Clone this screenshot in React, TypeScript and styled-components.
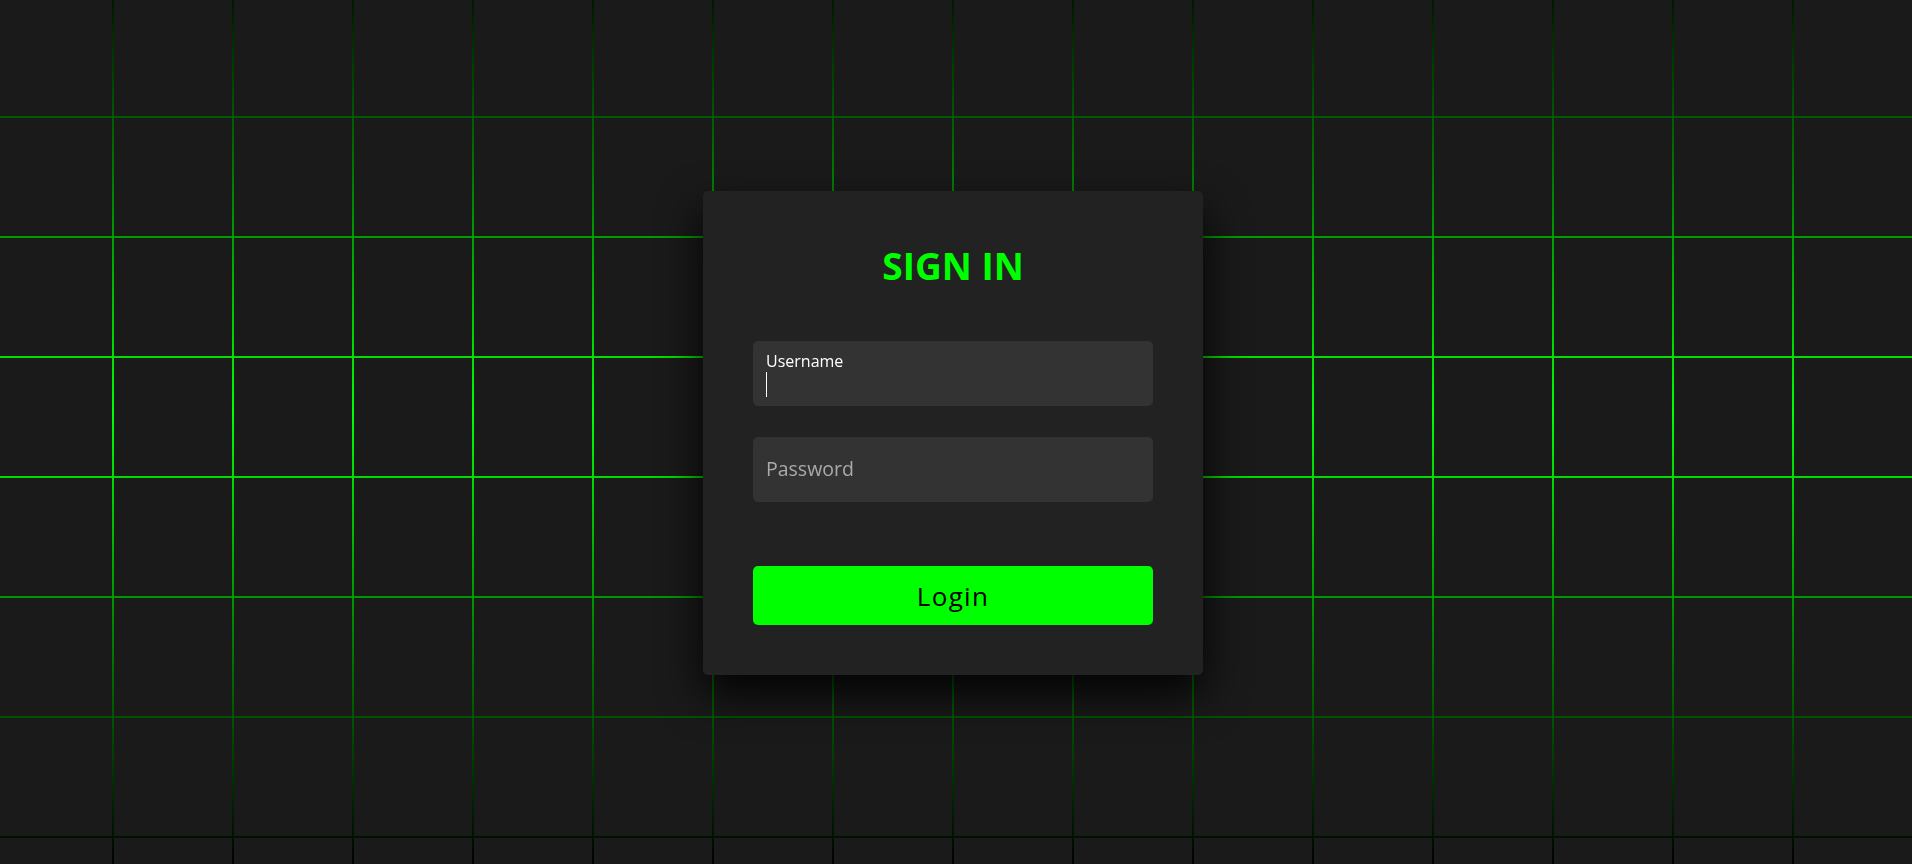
import { useState } from "react";
import styled, { createGlobalStyle } from "styled-components";

const COLUMNS = 16;
const ROWS = 8;

const GlobalStyle = createGlobalStyle`
  * {
    box-sizing: border-box;
  }
  html,
  body {
    margin: 0;
    padding: 0;
    background: #000;
    overflow: hidden;
    font-family: "Open Sans", "Noto Sans", sans-serif;
  }
`;

const Stage = styled.section`
  position: relative;
  width: 100vw;
  height: 100vh;
  overflow: hidden;
  background: #000;
`;

const Squares = styled.div`
  display: grid;
  grid-template-columns: repeat(${COLUMNS}, 118px);
  grid-auto-rows: 118px;
  gap: 2px;
  width: max-content;
  margin: -2px 0 0 -6px;
  background: linear-gradient(to bottom, #000 -42px, #0f0 414px, #000 870px);
`;

const Square = styled.span`
  background: #1a1a1a;
`;

const Overlay = styled.div`
  position: absolute;
  inset: 0;
  display: flex;
  align-items: center;
  justify-content: center;
  padding: 2px 6px 0 0;
`;

const SignIn = styled.div`
  width: 500px;
  padding: 50px;
  background: #222;
  border-radius: 5px;
  box-shadow: 0 19px 44px rgba(0, 0, 0, 0.9);
`;

const Content = styled.div`
  display: flex;
  flex-direction: column;
  align-items: center;
  gap: 50px;
`;

const Title = styled.h2`
  margin: 0;
  height: 50px;
  line-height: 50px;
  font-size: 37px;
  font-weight: 700;
  color: #0f0;
  text-transform: uppercase;
`;

const Form = styled.form`
  width: 100%;
  display: flex;
  flex-direction: column;
  gap: 31px;
`;

const InputBox = styled.div`
  position: relative;
  width: 100%;
`;

const Field = styled.input`
  display: block;
  width: 100%;
  height: 65px;
  padding: 31px 12.5px 9px;
  background: #333;
  border: none;
  outline: none;
  border-radius: 5px;
  color: #fff;
  caret-color: #fff;
  font-family: inherit;
  font-weight: 500;
  font-size: 20px;
  line-height: 25px;
`;

const Label = styled.i<{ $raised?: boolean }>`
  position: absolute;
  left: 13px;
  top: ${(p) => (p.$raised ? "12px" : "22px")};
  font-style: normal;
  font-size: ${(p) => (p.$raised ? "16px" : "19.5px")};
  line-height: ${(p) => (p.$raised ? "16px" : "20px")};
  color: ${(p) => (p.$raised ? "#fff" : "#aaa")};
  pointer-events: none;
`;

const Caret = styled.span`
  position: absolute;
  left: 13px;
  top: 31px;
  width: 1px;
  height: 25px;
  background: #fff;
  pointer-events: none;
`;

const Links = styled.div`
  width: 100%;
  height: 2px;
`;

const Submit = styled.button`
  width: 100%;
  height: 59px;
  padding: 0;
  border: none;
  border-radius: 5px;
  background: #0f0;
  color: #000;
  font-family: inherit;
  font-weight: 500;
  font-size: 26px;
  letter-spacing: 0.05em;
  cursor: pointer;
`;

function App() {
  const [username, setUsername] = useState("");
  const [password, setPassword] = useState("");

  return (
    <>
      <GlobalStyle />
      <Stage>
        <Squares>
          {Array.from({ length: COLUMNS * ROWS }, (_, i) => (
            <Square key={i} />
          ))}
        </Squares>
        <Overlay>
          <SignIn>
            <Content>
              <Title>Sign In</Title>
              <Form onSubmit={(e) => e.preventDefault()}>
                <InputBox>
                  <Field
                    type="text"
                    required
                    autoFocus
                    value={username}
                    onChange={(e) => setUsername(e.target.value)}
                  />
                  <Label $raised>Username</Label>
                  {username === "" && <Caret />}
                </InputBox>
                <InputBox>
                  <Field
                    type="password"
                    required
                    value={password}
                    onChange={(e) => setPassword(e.target.value)}
                  />
                  {password === "" && <Label>Password</Label>}
                </InputBox>
                <Links />
                <InputBox>
                  <Submit type="submit">Login</Submit>
                </InputBox>
              </Form>
            </Content>
          </SignIn>
        </Overlay>
      </Stage>
    </>
  );
}

export default App;
